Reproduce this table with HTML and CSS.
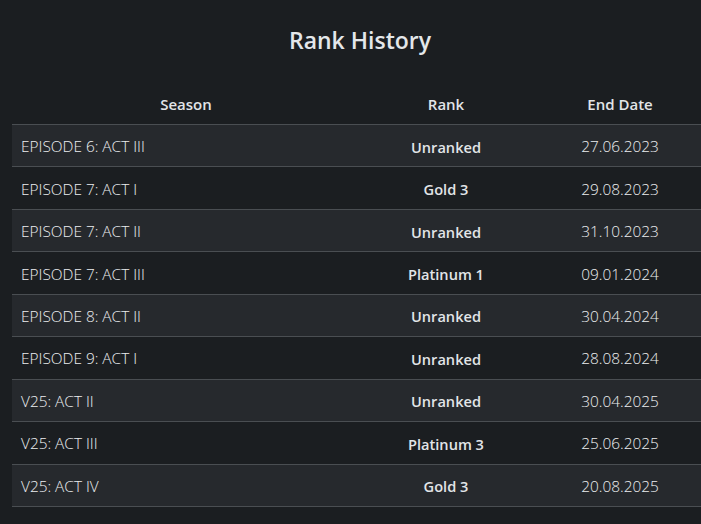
FILE: index.html
```html
<!DOCTYPE html>
<html>
<head>
<meta charset="utf-8">
<link rel="stylesheet" href="styles.css">
</head>
<body>
<div class="page">
  <h1 class="title">Rank History</h1>
  <table class="history">
    <colgroup>
      <col class="c-season">
      <col class="c-rank">
      <col class="c-date">
    </colgroup>
    <thead>
      <tr><th>Season</th><th>Rank</th><th>End Date</th></tr>
    </thead>
    <tbody>
      <tr><td class="season">EPISODE 6: ACT III</td><td class="rank">Unranked</td><td class="date">27.06.2023</td></tr>
      <tr><td class="season">EPISODE 7: ACT I</td><td class="rank">Gold 3</td><td class="date">29.08.2023</td></tr>
      <tr><td class="season">EPISODE 7: ACT II</td><td class="rank">Unranked</td><td class="date">31.10.2023</td></tr>
      <tr><td class="season">EPISODE 7: ACT III</td><td class="rank">Platinum 1</td><td class="date">09.01.2024</td></tr>
      <tr><td class="season">EPISODE 8: ACT II</td><td class="rank">Unranked</td><td class="date">30.04.2024</td></tr>
      <tr><td class="season">EPISODE 9: ACT I</td><td class="rank">Unranked</td><td class="date">28.08.2024</td></tr>
      <tr><td class="season">V25: ACT II</td><td class="rank">Unranked</td><td class="date">30.04.2025</td></tr>
      <tr><td class="season">V25: ACT III</td><td class="rank">Platinum 3</td><td class="date">25.06.2025</td></tr>
      <tr><td class="season">V25: ACT IV</td><td class="rank">Gold 3</td><td class="date">20.08.2025</td></tr>
    </tbody>
  </table>
</div>
</body>
</html>
```
FILE: styles.css
```css
html, body {
  margin: 0;
  padding: 0;
  background: #1b1e21;
  overflow: hidden;
}
body {
  font-family: "Open Sans", "Noto Sans", sans-serif;
  color: #e2e5e8;
}
.page {
  width: 696px;
  padding: 0 0 0 12px;
}
.title {
  margin: 0;
  padding-top: 24px;
  height: 84px;
  box-sizing: border-box;
  text-align: center;
  font-size: 23px;
  font-weight: 600;
  line-height: 32px;
  color: #e4e7ea;
}
.history {
  width: 696px;
  border-collapse: collapse;
  table-layout: fixed;
}
.c-season { width: 348px; }
.c-rank { width: 172px; }
.c-date { width: 176px; }
.history th {
  height: 40px;
  padding: 0;
  font-size: 15px;
  font-weight: 600;
  text-align: center;
  vertical-align: middle;
  color: #e2e5e8;
  border-bottom: 1px solid #4a4e52;
}
.history td {
  height: 42.44px;
  padding: 2px 9px 0;
  box-sizing: border-box;
  font-size: 15.4px;
  vertical-align: middle;
  border-bottom: 1px solid #4a4e52;
}
.history tbody tr:nth-child(odd) td {
  background: #26292d;
}
.season {
  text-align: left;
  font-weight: 300;
  color: #eceef0;
}
.history td.rank {
  text-align: center;
  font-weight: 600;
  font-size: 14.6px;
}
.date {
  text-align: center;
  font-weight: 300;
  color: #eceef0;
}
```
